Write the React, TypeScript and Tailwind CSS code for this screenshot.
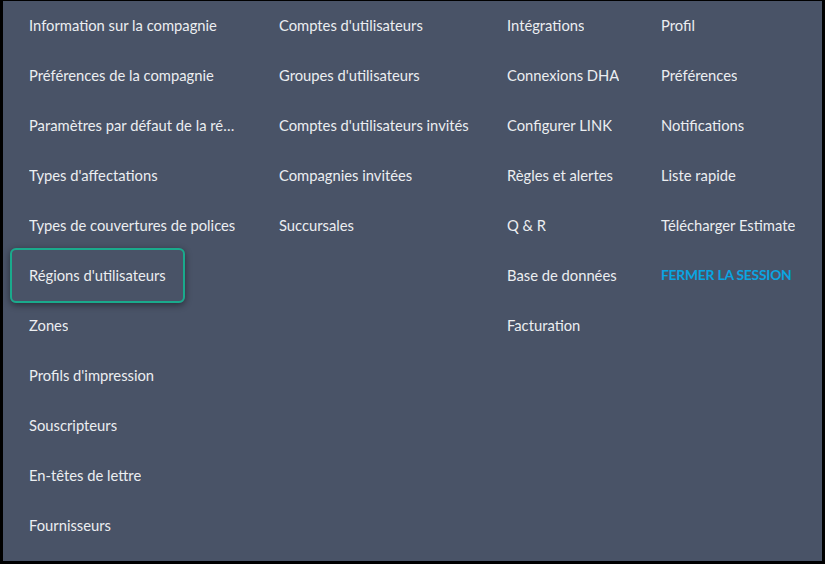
const columns: { w: string; max: string; items: string[] }[] = [
  {
    w: 'w-[250px]',
    max: 'max-w-[247px]',
    items: [
      'Information sur la compagnie',
      'Préférences de la compagnie',
      'Paramètres par défaut de la région',
      "Types d'affectations",
      'Types de couvertures de polices',
      "Régions d'utilisateurs",
      'Zones',
      "Profils d'impression",
      'Souscripteurs',
      'En-têtes de lettre',
      'Fournisseurs',
    ],
  },
  {
    w: 'w-[228px]',
    max: 'max-w-none',
    items: [
      "Comptes d'utilisateurs",
      "Groupes d'utilisateurs",
      "Comptes d'utilisateurs invités",
      'Compagnies invitées',
      'Succursales',
    ],
  },
  {
    w: 'w-[154px]',
    max: 'max-w-none',
    items: [
      'Intégrations',
      'Connexions DHA',
      'Configurer LINK',
      'Règles et alertes',
      'Q & R',
      'Base de données',
      'Facturation',
    ],
  },
  {
    w: 'flex-1',
    max: 'max-w-none',
    items: ['Profil', 'Préférences', 'Notifications', 'Liste rapide', 'Télécharger Estimate'],
  },
];

const App = () => {
  return (
    <div
      className="h-[564px] w-[825px] overflow-hidden border-x-[3px] border-t border-b-[3px] border-black bg-[#495367] text-[14.75px] text-[#eceef1]"
      style={{ fontFamily: 'Lato, "Open Sans", sans-serif' }}
    >
      <div className="-mt-px flex pl-[7px]">
        {columns.map((col, ci) => (
          <div key={ci} className={`${col.w} flex flex-col`}>
            {col.items.map((item) => {
              const active = item === "Régions d'utilisateurs";
              return (
                <div key={item} className="flex h-[50px] items-center">
                  <a
                    href="#"
                    className={`flex h-[55px] ${col.max} shrink-0 items-center whitespace-nowrap rounded-md border-2 px-[17px] ${
                      active
                        ? 'border-[#1aaa8c] shadow-[0_2px_7px_rgba(0,0,0,0.45)]'
                        : 'border-transparent'
                    }`}
                  >
                    <span className="truncate">{item}</span>
                  </a>
                </div>
              );
            })}
            {ci === 3 && (
              <div className="flex h-[50px] items-center">
                <a
                  href="#"
                  className="whitespace-nowrap px-[19px] text-[13.8px] font-bold tracking-[-0.2px] text-[#0aa5e2]"
                >
                  FERMER LA SESSION
                </a>
              </div>
            )}
          </div>
        ))}
      </div>
    </div>
  );
};

export default App;
